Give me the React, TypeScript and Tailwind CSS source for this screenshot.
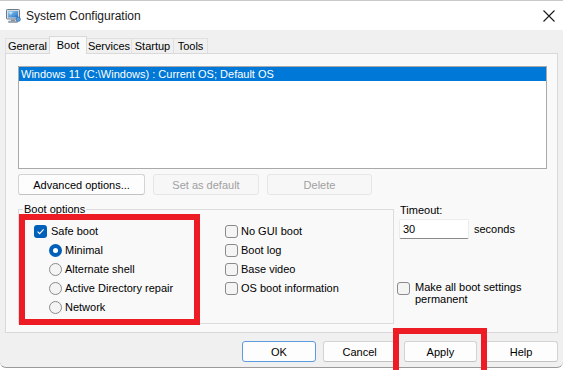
import React from "react";

function CheckBox({ checked = false }: { checked?: boolean }) {
  if (checked) {
    return (
      <span className="w-[13px] h-[13px] rounded-[3px] bg-[#005fb8] flex items-center justify-center shrink-0">
        <svg width="9" height="9" viewBox="0 0 9 9">
          <path d="M1.6 4.6 L3.6 6.6 L7.6 2.4" fill="none" stroke="#ffffff" strokeWidth="1.1" />
        </svg>
      </span>
    );
  }
  return <span className="w-[13px] h-[13px] rounded-[3px] border border-[#8a8a8a] bg-[#f4f4f4] shrink-0 block" />;
}

function Radio({ checked = false }: { checked?: boolean }) {
  if (checked) {
    return (
      <span className="w-[13px] h-[13px] rounded-full bg-[#005fb8] flex items-center justify-center shrink-0">
        <span className="w-[5px] h-[5px] rounded-full bg-white block" />
      </span>
    );
  }
  return <span className="w-[13px] h-[13px] rounded-full border border-[#8a8a8a] bg-[#f4f4f4] shrink-0 block" />;
}

function Btn({
  label,
  w,
  disabled = false,
  primary = false,
}: {
  label: string;
  w: string;
  disabled?: boolean;
  primary?: boolean;
}) {
  const base = "h-[21px] rounded-[3px] border flex items-center justify-center leading-[14px] ";
  let cls = base + "bg-[#fdfdfd] border-[#d3d3d3] border-b-[#c2c2c2] text-black";
  if (disabled) cls = base + "bg-[#f7f7f7] border-[#e6e6e6] text-[#a0a0a0]";
  if (primary) cls = base + "bg-[#fdfdfd] border-[#5b9be0] text-black";
  return <div className={cls + " " + w}>{label}</div>;
}

function AppIcon() {
  return (
    <svg width="15" height="14" viewBox="0 0 15 14">
      <defs>
        <linearGradient id="scr" x1="0" y1="0" x2="1" y2="1">
          <stop offset="0" stopColor="#9fd3f5" />
          <stop offset="1" stopColor="#1f6fc4" />
        </linearGradient>
      </defs>
      <rect x="0.5" y="0.5" width="13" height="9.5" rx="0.8" fill="#d9dde2" stroke="#6d7a88" />
      <rect x="2" y="2" width="10" height="6.5" fill="url(#scr)" />
      <path d="M3 3 L7 3 L4.5 6 Z" fill="#e8f6ff" opacity="0.7" />
      <rect x="5" y="10.5" width="4" height="1.5" fill="#8a96a3" />
      <rect x="2.5" y="12" width="9" height="1.6" rx="0.5" fill="#a8b2bc" stroke="#6d7a88" strokeWidth="0.5" />
      <circle cx="12.2" cy="10.2" r="2.2" fill="#5aa0de" stroke="#2a5f9a" strokeWidth="0.6" />
    </svg>
  );
}

export default function App() {
  return (
    <div className="w-[563px] h-[370px] bg-white relative overflow-hidden font-['Liberation_Sans',Arial,sans-serif] text-[11px] text-black">
      <div className="h-[368px] flex flex-col bg-[#f0f0f0] border-t border-[#c9c9c9] border-b border-b-[#9a9a9a] rounded-b-[6px] overflow-hidden">
        {/* title bar */}
        <div className="h-[29px] bg-white flex items-center shrink-0">
          <div className="ml-[6px] mt-[1px] flex items-center">
            <AppIcon />
          </div>
          <div className="ml-[5px] text-[12px] leading-[16px] text-[#1a1a1a]">System Configuration</div>
          <div className="ml-auto mr-[8px] flex items-center">
            <svg width="12" height="12" viewBox="0 0 12 12">
              <path d="M0.5 0.5 L11.5 11.5 M11.5 0.5 L0.5 11.5" stroke="#1a1a1a" strokeWidth="1.1" />
            </svg>
          </div>
        </div>

        {/* body */}
        <div className="flex-1 px-[5px] pt-[6px] flex flex-col">
          {/* tabs */}
          <div className="flex items-end h-[17px]">
            <div className="w-[44px] h-[15px] border-t border-l border-[#e0e0e0] flex items-center justify-center leading-[14px]">
              General
            </div>
            <div className="w-[38px] h-[18px] -mb-px relative z-10 bg-[#f9f9f9] border border-b-0 border-[#d9d9d9] flex items-start justify-center pt-[1px] leading-[14px]">
              Boot
            </div>
            <div className="w-[45px] h-[15px] border-t border-r border-[#e0e0e0] flex items-center justify-center leading-[14px]">
              Services
            </div>
            <div className="w-[42px] h-[15px] border-t border-r border-[#e0e0e0] flex items-center justify-center leading-[14px]">
              Startup
            </div>
            <div className="w-[34px] h-[15px] border-t border-r border-[#e0e0e0] flex items-center justify-center leading-[14px]">
              Tools
            </div>
          </div>

          {/* tab page */}
          <div className="h-[280px] bg-[#f9f9f9] border border-[#d9d9d9] pt-[12px] pl-[12px] flex flex-col">
            <div className="w-[529px] h-[103px] bg-white border border-[#a9a9a9]">
              <div className="h-[14px] bg-[#0078d7] text-white pl-[2px] leading-[14px]">
                Windows 11 (C:\Windows) : Current OS; Default OS
              </div>
            </div>

            <div className="mt-[5px] flex gap-[8px]">
              <Btn label="Advanced options..." w="w-[127px]" />
              <Btn label="Set as default" w="w-[106px]" disabled />
              <Btn label="Delete" w="w-[105px]" disabled />
            </div>

            <div className="mt-[7px] flex items-start">
              <fieldset className="w-[376px] h-[122px] border border-[#dcdcdc]">
                <legend className="ml-[4px] px-[1px] leading-[14px]">Boot options</legend>
                <div className="flex pt-[6px]">
                  <div className="w-[206px] pl-[15px] flex flex-col">
                    <div className="h-[19px] flex items-center gap-[4px]">
                      <CheckBox checked />
                      <span>Safe boot</span>
                    </div>
                    <div className="pl-[15px] flex flex-col">
                      <div className="h-[19px] flex items-center gap-[3px]">
                        <Radio checked />
                        <span>Minimal</span>
                      </div>
                      <div className="h-[19px] flex items-center gap-[3px]">
                        <Radio />
                        <span>Alternate shell</span>
                      </div>
                      <div className="h-[19px] flex items-center gap-[3px]">
                        <Radio />
                        <span>Active Directory repair</span>
                      </div>
                      <div className="h-[19px] flex items-center gap-[3px]">
                        <Radio />
                        <span>Network</span>
                      </div>
                    </div>
                  </div>
                  <div className="flex flex-col">
                    <div className="h-[19px] flex items-center gap-[3px]">
                      <CheckBox />
                      <span>No GUI boot</span>
                    </div>
                    <div className="h-[19px] flex items-center gap-[3px]">
                      <CheckBox />
                      <span>Boot log</span>
                    </div>
                    <div className="h-[19px] flex items-center gap-[3px]">
                      <CheckBox />
                      <span>Base video</span>
                    </div>
                    <div className="h-[19px] flex items-center gap-[3px]">
                      <CheckBox />
                      <span>OS boot information</span>
                    </div>
                  </div>
                </div>
              </fieldset>

              <div className="ml-[3px] pt-[1px] flex flex-col">
                <div className="pl-[3px] leading-[14px]">Timeout:</div>
                <div className="mt-[2px] ml-[2px] flex items-center">
                  <div className="w-[70px] h-[20px] bg-white border border-[#ececec] border-b-[#8a8a8a] rounded-[2px] pl-[3px] flex items-center leading-[14px]">
                    30
                  </div>
                  <span className="ml-[5px]">seconds</span>
                </div>
                <div className="mt-[42px] flex items-start">
                  <div className="mt-[1px]">
                    <CheckBox />
                  </div>
                  <div className="ml-[5px] leading-[12px]">
                    Make all boot settings
                    <br />
                    permanent
                  </div>
                </div>
              </div>
            </div>
          </div>

          {/* bottom buttons */}
          <div className="mt-[8px] ml-[237px] flex gap-[7px]">
            <Btn label="OK" w="w-[74px]" primary />
            <Btn label="Cancel" w="w-[74px]" />
            <Btn label="Apply" w="w-[74px]" />
            <Btn label="Help" w="w-[74px]" />
          </div>
        </div>
      </div>

      {/* red highlight overlays */}
      <div className="absolute left-[19px] top-[214px] w-[181px] h-[111px] border-[6px] border-[#ed1c24]" />
      <div className="absolute left-[393px] top-[328px] w-[94px] h-[50px] border-[6px] border-[#ed1c24]" />
    </div>
  );
}
